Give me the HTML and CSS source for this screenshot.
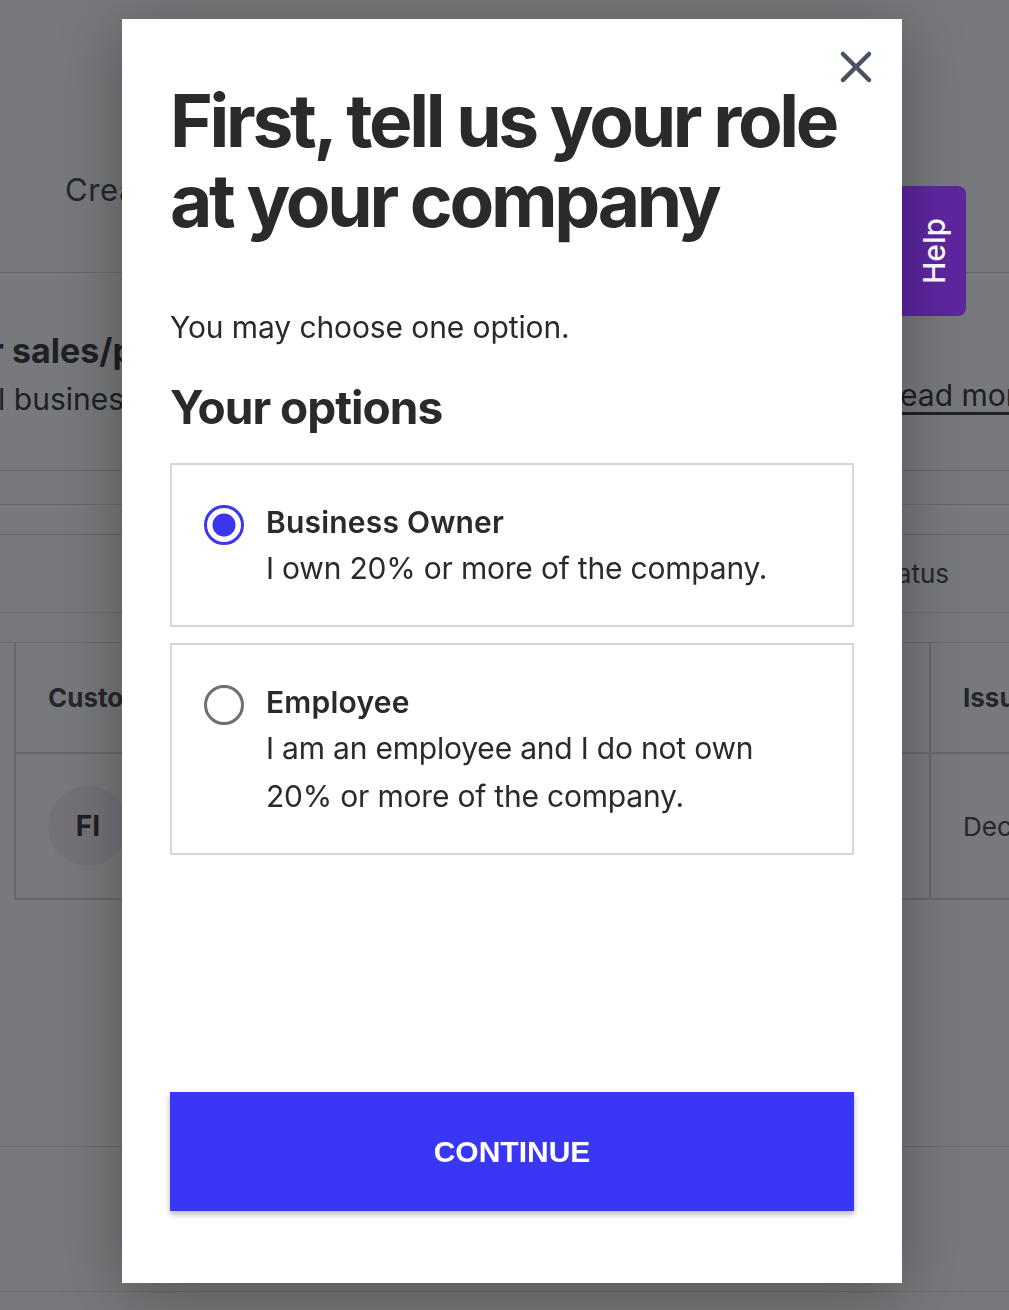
FILE: index.html
```html
<!DOCTYPE html>
<html lang="en">

<head>
    <meta charset="UTF-8">
    <meta name="viewport" content="width=device-width, initial-scale=1.0">
    <title>Your role</title>

    <link rel="stylesheet" href="styles.css">
</head>

<body>
    <!-- page behind the dialog -->
    <div class="page">
        <div class="row row-top">
            <span class="tab-label">Create invoice</span>
        </div>
        <div class="row row-intro">
            <div class="intro-text">
                <div class="intro-title">our sales/purchases</div>
                <div class="intro-sub">all business documents</div>
            </div>
            <a class="read-more" href="#">Read more</a>
        </div>
        <div class="row row-thin"></div>
        <div class="row row-thinner"></div>
        <div class="row row-filter">
            <span class="filter-status">Status</span>
        </div>
        <div class="row row-gap"></div>

        <table class="doc-table">
            <thead>
                <tr>
                    <th class="col-customer">Customer</th>
                    <th class="col-mid"></th>
                    <th class="col-issued">Issued</th>
                </tr>
            </thead>
            <tbody>
                <tr>
                    <td class="col-customer"><span class="avatar">FI</span></td>
                    <td class="col-mid"></td>
                    <td class="col-issued">Dec 12</td>
                </tr>
            </tbody>
        </table>

        <div class="row row-empty"></div>
        <div class="row row-foot"></div>
    </div>

    <div class="overlay"></div>

    <button type="button" class="help-tab"><span>Help</span></button>

    <div class="modal">
        <button type="button" class="close-btn" onclick="closeModal()">
            <svg width="34" height="34" viewBox="0 0 34 34">
                <path d="M4 4 L30 30 M30 4 L4 30" stroke="#4a5160" stroke-width="4.5" stroke-linecap="round" fill="none" />
            </svg>
        </button>

        <h1 class="modal-title">First, tell us your role<br>at your company</h1>
        <p class="modal-sub">You may choose one option.</p>
        <h2 class="modal-heading">Your options</h2>

        <form id="roleForm" class="options">
            <label class="option">
                <input type="radio" name="role" value="owner" checked>
                <span class="radio"></span>
                <span class="option-text">
                    <span class="option-title">Business Owner</span>
                    <span class="option-desc">I own 20% or more of the company.</span>
                </span>
            </label>
            <label class="option">
                <input type="radio" name="role" value="employee">
                <span class="radio"></span>
                <span class="option-text">
                    <span class="option-title">Employee</span>
                    <span class="option-desc">I am an employee and I do not own 20% or more of the company.</span>
                </span>
            </label>
        </form>

        <button type="button" class="continue-btn" onclick="submitRole()">CONTINUE</button>
    </div>

    <script>
        function closeModal() {
            document.querySelector(".modal").style.display = "none";
            document.querySelector(".overlay").style.display = "none";
        }

        function submitRole() {
            var role = document.querySelector("input[name=role]:checked").value;
            console.log("role: " + role);
        }
    </script>
</body>

</html>
```

FILE: styles.css
```css
body {
    margin: 0;
    background: #fff;
    font-family: Inter, "Noto Sans", sans-serif;
    color: #222;
    overflow: hidden;
}

/* page behind */
.page {
    width: 1009px;
    height: 1310px;
    overflow: hidden;
}

.row {
    border-bottom: 1px solid #d6d6d8;
    display: flex;
    align-items: center;
}

.row-top {
    height: 272px;
    align-items: flex-start;
}

.tab-label {
    margin: 171px 0 0 65px;
    font-size: 31px;
    letter-spacing: 0.6px;
    color: #333;
    white-space: nowrap;
}

.row-intro {
    height: 197px;
    justify-content: space-between;
    align-items: flex-start;
}

.intro-text {
    margin: 54px 0 0 -52px;
    white-space: nowrap;
}

.intro-title {
    font-size: 34px;
    font-weight: 700;
    line-height: 48px;
}

.intro-sub {
    margin-left: 26px;
    font-size: 30px;
    line-height: 48px;
}

.read-more {
    margin: 104px -25px 0 0;
    font-size: 30px;
    color: #222;
    white-space: nowrap;
    text-decoration: underline;
    text-underline-offset: 6px;
}

.row-thin {
    height: 33px;
}

.row-thinner {
    height: 29px;
}

.row-filter {
    height: 77px;
    justify-content: flex-end;
}

.filter-status {
    margin-right: 60px;
    font-size: 26px;
    color: #333;
}

.row-gap {
    height: 29px;
}

.doc-table {
    border-collapse: collapse;
    table-layout: fixed;
    margin-left: 14px;
    width: 1100px;
}

.doc-table th,
.doc-table td {
    box-sizing: border-box;
    border: 2px solid #d6d6d8;
    border-top: none;
    padding: 0 0 0 32px;
    text-align: left;
    font-size: 26px;
    color: #333;
    white-space: nowrap;
    overflow: hidden;
}

.doc-table th {
    height: 110px;
    font-weight: 700;
}

.doc-table td {
    height: 146px;
}

.doc-table .col-customer {
    width: 200px;
}

.doc-table .col-mid {
    width: 715px;
}

.avatar {
    display: inline-flex;
    align-items: center;
    justify-content: center;
    width: 80px;
    height: 80px;
    border-radius: 50%;
    background: #f3edf7;
    font-weight: 700;
    font-size: 28px;
    color: #222;
}

.row-empty {
    height: 246px;
}

.row-foot {
    height: 144px;
}

.overlay {
    position: fixed;
    inset: 0;
    background: rgba(30, 31, 36, 0.6);
}

.help-tab {
    position: fixed;
    left: 902px;
    top: 186px;
    width: 64px;
    height: 130px;
    border: none;
    border-radius: 0 8px 8px 0;
    background: #5e26a0;
    padding: 0;
    display: flex;
    align-items: center;
    justify-content: center;
}

.help-tab span {
    transform: rotate(-90deg);
    color: #fff;
    font-family: Inter, sans-serif;
    font-size: 30px;
    font-weight: 500;
}

/* dialog */
.modal {
    position: absolute;
    left: 122px;
    top: 19px;
    width: 780px;
    height: 1264px;
    box-sizing: border-box;
    padding: 0 48px 72px 48px;
    background: #fff;
    box-shadow: 0 10px 60px rgba(0, 0, 0, 0.3);
    display: flex;
    flex-direction: column;
}

.close-btn {
    position: absolute;
    top: 31px;
    right: 29px;
    border: none;
    background: none;
    padding: 0;
    width: 34px;
    height: 34px;
}

.modal-title {
    margin: 62px 0 0 0;
    font-size: 73px;
    font-weight: 700;
    line-height: 80px;
    letter-spacing: -3.3px;
    color: #2a2a2a;
    white-space: nowrap;
}

.modal-sub {
    margin: 66px 0 0 0;
    font-size: 30px;
    line-height: 40px;
    letter-spacing: -0.1px;
    color: #2a2a2a;
}

.modal-heading {
    margin: 32px 0 0 0;
    font-size: 46px;
    font-weight: 700;
    line-height: 56px;
    letter-spacing: -1px;
    color: #2a2a2a;
}

.options {
    margin-top: 28px;
    display: flex;
    flex-direction: column;
    gap: 16px;
}

.option {
    display: flex;
    align-items: flex-start;
    gap: 22px;
    border: 2px solid #d3d6da;
    padding: 35px 70px 33px 32px;
}

.option input {
    display: none;
}

.radio {
    flex: none;
    width: 40px;
    height: 40px;
    margin-top: 5px;
    box-sizing: border-box;
    border-radius: 50%;
    border: 3.5px solid #6e6e6e;
}

.option input:checked + .radio {
    border-color: #3b36f0;
    background: radial-gradient(circle, #3b36f0 0 11px, transparent 12px);
}

.option-text {
    display: flex;
    flex-direction: column;
    color: #2a2a2a;
}

.option-title {
    font-size: 30px;
    font-weight: 600;
    line-height: 44px;
    letter-spacing: 0.2px;
}

.option-desc {
    font-size: 30px;
    line-height: 48px;
    letter-spacing: -0.2px;
}

.continue-btn {
    margin-top: auto;
    height: 119px;
    border: none;
    background: #3937f5;
    color: #fff;
    font-family: "Liberation Sans", Arial, sans-serif;
    font-size: 30px;
    font-weight: 700;
    box-shadow: 0 3px 6px rgba(0, 0, 0, 0.3);
}
```
